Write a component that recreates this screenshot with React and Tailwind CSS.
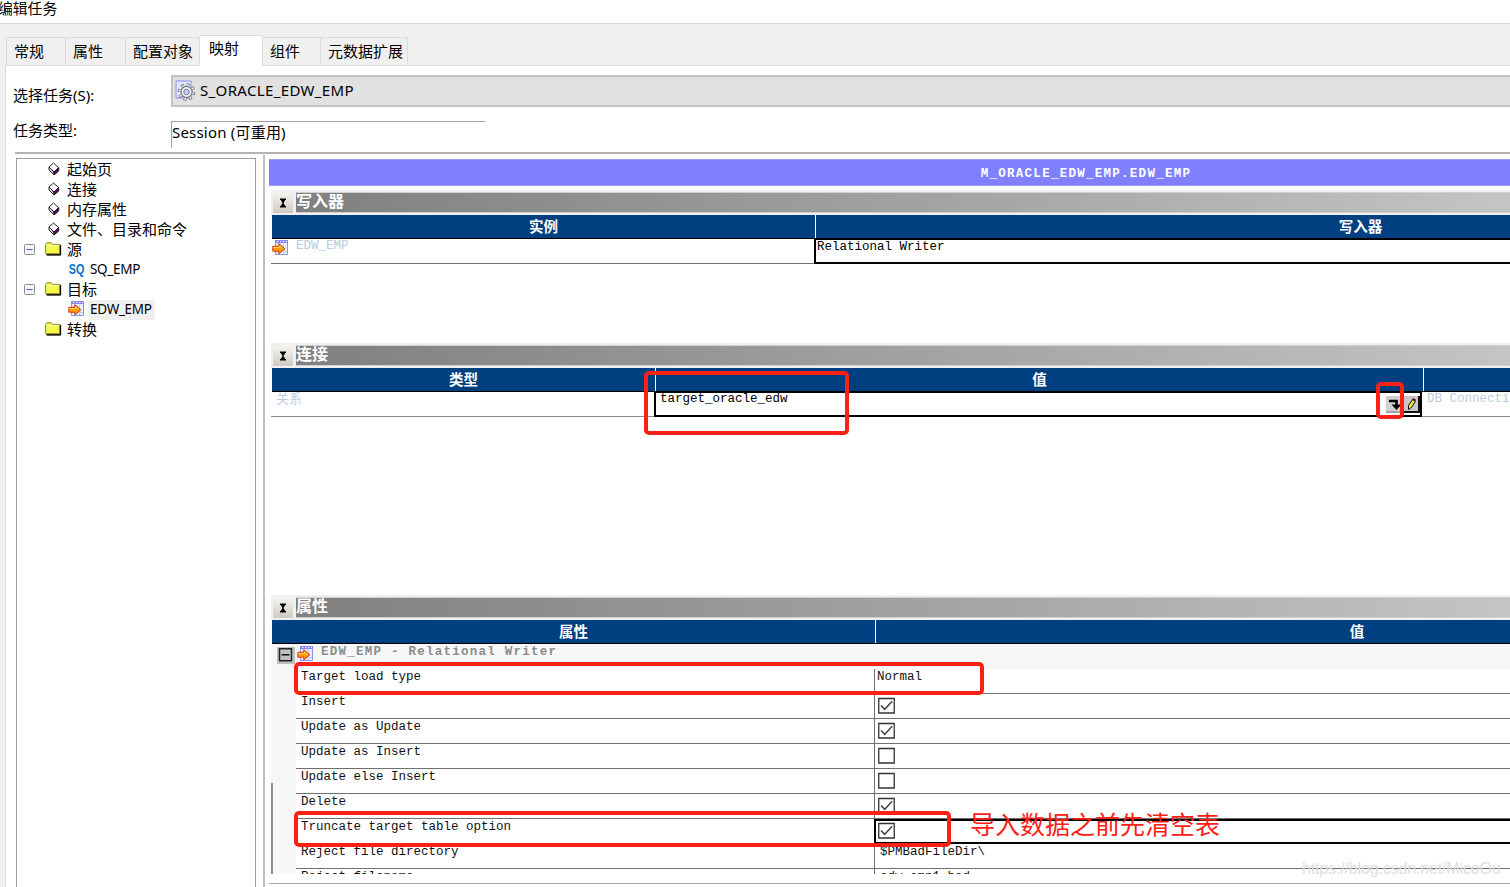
import clsx from "clsx";

// ─── Data ──────────────────────────────────────────────────────────
const TABS = [
  { label: "常规", width: "w-[59px]" },
  { label: "属性", width: "w-[60px]" },
  { label: "配置对象", width: "w-[74px]" },
  { label: "映射", width: "w-[63px]", active: true },
  { label: "组件", width: "w-[58px]" },
  { label: "元数据扩展", width: "w-[87px]" },
];

const ROWS = [
  { name: "Target load type", value: "Normal" },
  { name: "Insert", checked: true },
  { name: "Update as Update", checked: true },
  { name: "Update as Insert", checked: false },
  { name: "Update else Insert", checked: false },
  { name: "Delete", checked: true },
  { name: "Truncate target table option", checked: true, focused: true },
  { name: "Reject file directory", value: "$PMBadFileDir\\", inset: true },
  { name: "Reject filename", value: "edw_emp1.bad", inset: true },
];

const SANS = "font-['Noto_Sans','Noto_Sans_CJK_SC',sans-serif]";
const MONO = "font-['Liberation_Mono','Noto_Sans_CJK_SC',monospace]";

// ─── Icons ─────────────────────────────────────────────────────────
function BookIcon() {
  return (
    <svg width="12" height="14" viewBox="0 0 12 14" className="-mt-[2px] shrink-0">
      <path d="M5.5 1 10.5 5.5 6 10 1 5Z" fill="#fff" stroke="#222" />
      <path d="M1 5v3l5 4.8V10Z" fill="#fff" stroke="#222" />
      <path d="M6 10v3l4.7-4V5.5Z" fill="#5b0a6b" stroke="#1d0822" />
      <path d="M2.5 8 5 10.4" stroke="#888" />
    </svg>
  );
}

function FolderIcon() {
  return (
    <svg width="17" height="14" viewBox="0 0 17 14" className="-mt-[2px] shrink-0">
      <path d="M2 3h14v10.3H2z" fill="#111" />
      <path d="M.6 11.8V2.4L2 .8h4.2l1.4 1.6h7.2v9.4Z" fill="#f6f64a" stroke="#8b8b20" />
      <path d="M1.6 3.6h12.6" stroke="#ffffc8" />
      <path d="M15.5 3v10M1.5 12.8h14" stroke="#111" strokeWidth="1.3" />
    </svg>
  );
}

function TargetIcon() {
  return (
    <svg width="17" height="17" viewBox="0 0 17 17" className="shrink-0">
      <path d="M3.5 1.5h12v14h-12z" fill="#e9ecff" stroke="#8f92f5" />
      <path d="M3 1h13v3H3z" fill="#8486ee" />
      <path d="M5 2.5h10" stroke="#fff" strokeDasharray="1.4 1.6" />
      <path d="M7.5 5v10M11.5 5v10M4 12.5h11" stroke="#c3c8fb" />
      <path d="M.8 7.3h6V4.6l6 5.2-6 5v-2.6h-6Z" fill="#ff9a10" stroke="#d8380c" />
      <path d="M1.5 8.5h6V7l3 2.6" stroke="#ffe14a" fill="none" />
    </svg>
  );
}

function SessionIcon() {
  return (
    <svg width="21" height="21" viewBox="0 0 21 21" className="-mt-[2px] shrink-0">
      <path d="M1 1h15v17H1z" fill="#dfe6ff" stroke="#8a8cf0" />
      <circle cx="11.5" cy="12" r="7.2" fill="none" stroke="#6f6f74" strokeWidth="3.2" strokeDasharray="2.8 2.85" />
      <circle cx="11.5" cy="12" r="5.6" fill="#eeeeee" stroke="#77777c" strokeWidth="1.2" />
      <circle cx="11.5" cy="12" r="7" fill="none" stroke="#ededed" strokeWidth="2" strokeDasharray="1.7 3.8" strokeDashoffset="-.5" />
      <circle cx="11.5" cy="12" r="2.7" fill="#c9cdfb" stroke="#7779a8" />
    </svg>
  );
}

function Expander() {
  return (
    <svg width="11" height="11" viewBox="0 0 11 11" className="shrink-0">
      <rect x=".5" y=".5" width="10" height="10" rx="1" fill="#f4f4f4" stroke="#8c8c8c" />
      <path d="M2.5 5.5h6" stroke="#4a63b0" />
    </svg>
  );
}

function CollapseButton() {
  return (
    <div className="flex h-full w-[25px] shrink-0 items-start bg-[#f0f0f0] pt-[3px] pl-[2px]">
      <div className="flex h-[20px] w-[20px] items-center justify-center bg-gradient-to-b from-[#f4f3f0] to-[#cfcbc0]">
        <svg width="8" height="10" viewBox="0 0 8 10">
          <path d="M1 1.3h6M1 8.7h6" stroke="#000" strokeWidth="1.6" />
          <path d="M1.5 1.5h5L4.5 5l2 3.5h-5l2-3.5Z" fill="#000" />
        </svg>
      </div>
    </div>
  );
}

function Checkbox({ checked }) {
  return (
    <svg width="17" height="17" viewBox="0 0 17 17" className="mt-[3px] ml-[3px] shrink-0">
      <path d="M.75 1.5h15.5v14.5H.75z" fill="#fff" stroke="#333" strokeWidth="1.3" />
      {checked && <path d="m3 8.5 3.7 3.8 7.5-8" fill="none" stroke="#444" strokeWidth="1.5" />}
    </svg>
  );
}

// ─── Tree ──────────────────────────────────────────────────────────
function TreePage({ label }) {
  return (
    <div className="flex h-[20px] items-center gap-[7px] pl-[31px]">
      <BookIcon />
      <span className="-mt-[2px]">{label}</span>
    </div>
  );
}

function TreeFolder({ label, open }) {
  return (
    <div className="flex h-[20px] items-center pl-[7px]">
      <span className="-mt-[1px] flex w-[21px]">{open && <Expander />}</span>
      <FolderIcon />
      <span className="-mt-[2px] ml-[5px]">{label}</span>
    </div>
  );
}

function TreeLeaf({ icon, label, selected }) {
  return (
    <div className="flex h-[20px] items-center pl-[51px] text-[13.5px] tracking-[-0.3px]">
      <span className="-mt-[3px] flex w-[20px]">{icon}</span>
      <span className={clsx("flex h-[20px] items-center pr-[3px] pl-[2px]", selected && "bg-[#f0f0f0]")}>{label}</span>
    </div>
  );
}

function Tree() {
  return (
    <div className="mt-[4px] ml-[10px] w-[240px] shrink-0 border-x border-t border-[#9c9c9c] bg-white pt-[1px] text-[15px] leading-none text-black">
      <TreePage label="起始页" />
      <TreePage label="连接" />
      <TreePage label="内存属性" />
      <TreePage label="文件、目录和命令" />
      <TreeFolder label="源" open />
      <TreeLeaf
        icon={<span className="inline-block origin-left scale-x-[.72] pl-px font-['Liberation_Sans',sans-serif] text-[15px] font-bold tracking-normal text-[#0870d0]">SQ</span>}
        label="SQ_EMP"
      />
      <TreeFolder label="目标" open />
      <TreeLeaf icon={<TargetIcon />} label="EDW_EMP" selected />
      <TreeFolder label="转换" />
    </div>
  );
}

// ─── Grid parts ────────────────────────────────────────────────────
function Band({ title }) {
  return (
    <div className="flex h-[25px] w-[1638px] bg-[#f0f0f0]">
      <CollapseButton />
      <div className="mt-[2px] flex h-[21px] flex-1 items-center border-y border-[#d0d0d0] bg-gradient-to-r from-[#808080] from-0% to-[#c4c4c4] to-75% text-[16px] leading-none font-bold text-white">
        {title}
      </div>
    </div>
  );
}

function HeadCell({ width, children, first }) {
  return (
    <div
      className={clsx(
        "flex h-full shrink-0 items-center justify-center pt-[3px] text-[14.5px] leading-none font-bold text-white",
        !first && "border-l border-white",
        width
      )}
    >
      {children}
    </div>
  );
}

function HeadRow({ children }) {
  return <div className="ml-px flex h-[24px] w-[1637px] border-b border-black bg-[#004080]">{children}</div>;
}

function PropertyRow({ row }) {
  return (
    <div className="flex h-[25px] w-[1567px]">
      <div className="w-[25px] shrink-0 bg-[#f7f7f7]" />
      <div className="w-[578px] shrink-0 border-b border-[#707070] pl-[5px]">{row.name}</div>
      <div
        className={clsx(
          "flex flex-1 border-l",
          row.focused ? "border-y-2 border-l-2 border-black" : "border-b border-[#707070]"
        )}
      >
        {row.value ? (
          <span className={row.inset ? "pl-[5px]" : "pl-[2px]"}>{row.value}</span>
        ) : (
          <div className={row.focused ? "-mt-[2px] -ml-[1px]" : ""}>
            <Checkbox checked={row.checked} />
          </div>
        )}
      </div>
    </div>
  );
}

// ─── Sections ──────────────────────────────────────────────────────
function WriterSection() {
  return (
    <section className="h-[153px]">
      <Band title="写入器" />
      <HeadRow>
        <HeadCell width="w-[543px]" first>实例</HeadCell>
        <HeadCell width="w-[1090px]">写入器</HeadCell>
      </HeadRow>
      <div className="flex h-[25px] w-[1638px] text-[12.5px] leading-[15px]">
        <div className="flex w-[543px] shrink-0 border-b border-[#707070] pl-[1px]">
          <TargetIcon />
          <span className="ml-[7px] text-[#b9cde2]">EDW_EMP</span>
        </div>
        <div className="flex-1 border-2 border-t border-black pl-px">Relational Writer</div>
      </div>
    </section>
  );
}

function ConnectionSection() {
  return (
    <section className="h-[252px]">
      <Band title="连接" />
      <HeadRow>
        <HeadCell width="w-[383px]" first>类型</HeadCell>
        <HeadCell width="w-[768px]">值</HeadCell>
        <HeadCell width="w-[486px]" />
      </HeadRow>
      <div className="flex h-[25px] w-[1638px] text-[12.5px] leading-[15px]">
        <div className="w-[383px] shrink-0 border-b border-[#8c8c8c] pl-[5px] text-[13px] text-[#b9cde2]">关系</div>
        <div className="flex w-[768px] shrink-0 justify-between border-2 border-t border-black pl-[4px]">
          <span className="-mt-px">target_oracle_edw</span>
          <div className="flex gap-[2px] pt-[3px]">
            <svg width="16" height="17" viewBox="0 0 16 17">
              <path d="M0 0h16v17H0z" fill="#d0d0d0" />
              <path d="M0 16h16M15.5 0v17" stroke="#777" />
              <path d="M3 5h7.5v5" fill="none" stroke="#000" strokeWidth="2.6" />
              <path d="M5.5 8.5h10L10.5 14Z" fill="#000" />
            </svg>
            <svg width="16" height="17" viewBox="0 0 16 17">
              <path d="M0 0h16v17H0z" fill="#c8c8c8" />
              <path d="M0 16h16M15 0v17" stroke="#111" strokeWidth="2" />
              <path d="m4.5 9.5 4-6 3 1.5-4 6.5-3 2Z" fill="#e8e840" stroke="#111" />
              <path d="m8.5 3 3 1.5" stroke="#711" strokeWidth="2" />
            </svg>
          </div>
        </div>
        <div className="flex-1 border-b border-[#8c8c8c] pl-[5px] text-[#b9cde2]">DB Connecti</div>
      </div>
    </section>
  );
}

function PropertySection() {
  return (
    <section className="relative h-[279px] overflow-hidden">
      <Band title="属性" />
      <HeadRow>
        <HeadCell width="w-[603px]" first>属性</HeadCell>
        <HeadCell width="w-[963px]">值</HeadCell>
      </HeadRow>
      <div className="flex h-[25px] w-[1638px] bg-[#f7f7f7] text-[12.5px] leading-[15px]">
        <svg width="18" height="20" viewBox="0 0 18 20" className="ml-[6px] shrink-0">
          <path d="M0 3h18v17H0z" fill="#c0c0c0" />
          <path d="M2.5 4.8h12v12h-12z" fill="#c0c0c0" stroke="#222" strokeWidth="1.5" />
          <path d="M4.5 10.8h8" stroke="#111" strokeWidth="1.5" />
        </svg>
        <div className="ml-[2px] flex pt-px">
          <TargetIcon />
        </div>
        <span className="mt-px ml-[7px] font-bold tracking-[1.25px] text-[#8c8c8c]">EDW_EMP - Relational Writer</span>
      </div>
      <div className="text-[12.5px] leading-[17px] text-[#111]">
        {ROWS.map((row) => (
          <PropertyRow key={row.name} row={row} />
        ))}
      </div>
      <div className="absolute bottom-0 left-0 h-[91px] w-[2px] bg-[#909090]" />
    </section>
  );
}

// ─── Red marker around a spot that needs attention ─────────────────
function Marker({ className }) {
  return <div className={clsx("absolute rounded-[5px] border-4 border-[#ff2015]", className)} />;
}

export default function App() {
  return (
    <div className={`relative flex h-[887px] w-[1510px] flex-col overflow-hidden bg-[#f0f0f0] text-black ${SANS}`}>
      <header className="h-[24px] shrink-0 border-b border-[#d9d9d9] bg-white">
        <div className="-ml-[2px] text-[14.8px] leading-[16px] whitespace-nowrap">编辑任务</div>
      </header>

      <nav className="flex h-[41px] shrink-0 items-end pl-[6px] text-[15px] leading-none">
        {TABS.map((tab, i) => (
          <div
            key={tab.label}
            className={clsx(
              "flex shrink-0 items-center border-t border-r border-[#dcdcdc] whitespace-nowrap",
              i === 0 ? "w-[60px] border-l" : tab.width,
              tab.active ? "z-10 -mb-px h-[31px] bg-white pb-[5px] pl-[9px]" : "h-[28px] pb-px pl-[7px]"
            )}
          >
            {tab.label}
          </div>
        ))}
      </nav>

      <main className="ml-[5px] flex min-h-0 flex-1 flex-col border-t border-l border-[#dcdcdc] bg-white">
        <div className="mt-[9px] flex h-[32px] shrink-0 text-[15px] leading-none">
          <div className="w-[165px] shrink-0 pt-[13px] pl-[7px] text-[15px]">选择任务(S):</div>
          <div className="flex flex-1 items-center gap-[4px] border-2 border-r-0 border-[#c3c3c3] bg-[#e1e1e1] pl-[2px]">
            <SessionIcon />
            <span className="-mt-px text-[15px] tracking-[0.35px]">S_ORACLE_EDW_EMP</span>
          </div>
        </div>
        <div className="mt-[14px] flex h-[27px] shrink-0 text-[15px] leading-none">
          <div className="w-[165px] shrink-0 pt-[2px] pl-[7px]">任务类型:</div>
          <div className="flex w-[314px] items-center border-t border-l border-[#a0a0a0] pb-[5px] tracking-[0.2px]">Session (可重用)</div>
        </div>
        <div className="mt-[4px] ml-[9px] h-[2px] shrink-0 bg-[#b4b4b4]" />

        <div className="flex min-h-0 flex-1">
          <Tree />
          <div className="mt-[1px] ml-[7px] w-[2px] shrink-0 bg-[#c0c0c0]" />
          <div className={`min-w-0 flex-1 overflow-hidden pt-[5px] ${MONO}`}>
            <div className="ml-[4px] flex h-[27px] w-[1634px] items-center justify-center border-y border-[#9a9aff] bg-[#8080ff] pt-[3px] text-[12.5px] font-bold tracking-[1.27px] text-white">
              M_ORACLE_EDW_EMP.EDW_EMP
            </div>
            <div className="mt-[4px] ml-[6px]">
              <WriterSection />
              <ConnectionSection />
              <PropertySection />
            </div>
            <div className="mt-[9px] ml-[4px] h-px bg-[#a8a8a8]" />
          </div>
        </div>
      </main>

      <Marker className="top-[371px] left-[644px] h-[64px] w-[205px]" />
      <Marker className="top-[382px] left-[1376px] h-[37px] w-[28px]" />
      <Marker className="top-[662px] left-[294px] h-[33px] w-[690px]" />
      <Marker className="top-[811px] left-[294px] h-[36px] w-[657px]" />
      <div className="absolute top-[809px] left-[970px] text-[25px] leading-[30px] whitespace-nowrap text-[#ff2015]">
        导入数据之前先清空表
      </div>
      <div className="absolute top-[859px] left-[1302px] font-['Liberation_Sans',sans-serif] text-[16px] leading-[20px] tracking-[-0.15px] whitespace-nowrap text-[#dedede]">
        https://blog.csdn.net/MicoOu
      </div>
    </div>
  );
}
